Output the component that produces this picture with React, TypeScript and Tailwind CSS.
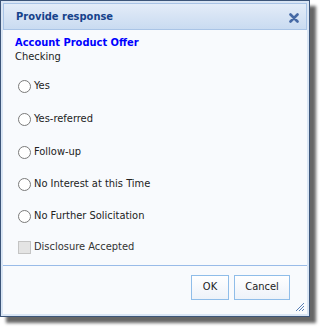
const options = [
  { label: "Yes", h: "h-[33px]" },
  { label: "Yes-referred", h: "h-[33px]" },
  { label: "Follow-up", h: "h-[32px]" },
  { label: "No Interest at this Time", h: "h-[32px]" },
  { label: "No Further Solicitation", h: "h-[32px]" },
];

const Radio = ({ label, h }: { label: string; h: string }) => (
  <label className={`flex items-center ${h}`}>
    <span className="ml-[3px] mr-[3px] inline-block h-[13px] w-[13px] rounded-full border border-[#7a7a7a] bg-white" />
    <span className="text-[11px] text-[#222]">{label}</span>
  </label>
);

export default function App() {
  return (
    <div
      className="h-[331px] w-[323px] bg-white"
      style={{ fontFamily: "Tahoma, 'DejaVu Sans Condensed', 'Liberation Sans', sans-serif" }}
    >
      <div className="flex h-[317px] w-[310px] flex-col border border-[#3c5579] bg-[#d9e5f4] p-[2px] shadow-[6px_6px_3px_rgba(0,0,0,0.6)]">
        {/* header */}
        <div className="flex h-[27px] items-center justify-between border border-[#a9c4e6] bg-gradient-to-b from-[#e3ecf8] to-[#c9dbf1] pl-[12px] pr-[7px] pt-[2px]">
          <span className="text-[11px] font-bold text-[#15428b]">Provide response</span>
          <svg width="10" height="10" viewBox="0 0 10 10">
            <path d="M1.5 1.5 L8.5 8.5 M8.5 1.5 L1.5 8.5" stroke="#4569a5" strokeWidth="2.6" strokeLinecap="round" />
          </svg>
        </div>

        {/* body */}
        <div className="flex flex-1 flex-col bg-[#f8fafd]">
          <div className="pl-[12px] pt-[6px]">
            <div className="text-[11px] font-bold leading-[14px] text-[#0000ff]">Account Product Offer</div>
            <div className="text-[11px] leading-[13px] text-[#222]">Checking</div>
          </div>

          <div className="mt-[7px] flex flex-col pl-[12px]">
            {options.map((o) => (
              <Radio key={o.label} label={o.label} h={o.h} />
            ))}
            <label className="flex h-[31px] items-center">
              <span className="ml-[3px] mr-[3px] inline-block h-[13px] w-[13px] border border-[#c4c4c4] bg-[#e4e4e4]" />
              <span className="text-[11px] text-[#333]">Disclosure Accepted</span>
            </label>
          </div>

          <div className="mt-[2px] border-t border-[#99bbe8]" />

          <div className="relative flex flex-1 items-start justify-end gap-[5px] pr-[17px] pt-[9px]">
            <button className="h-[25px] w-[38px] border border-[#8fbde9] bg-gradient-to-b from-white to-[#edf2f9] text-[11px] text-[#222]">
              OK
            </button>
            <button className="h-[25px] w-[56px] border border-[#8fbde9] bg-gradient-to-b from-white to-[#edf2f9] text-[11px] text-[#222]">
              Cancel
            </button>
            <svg className="absolute bottom-[2px] right-[2px]" width="11" height="11" viewBox="0 0 11 11">
              <path d="M10 2 L2 10 M10 5 L5 10 M10 8 L8 10" stroke="#5a7fb5" strokeWidth="1" />
            </svg>
          </div>
        </div>
      </div>
    </div>
  );
}
